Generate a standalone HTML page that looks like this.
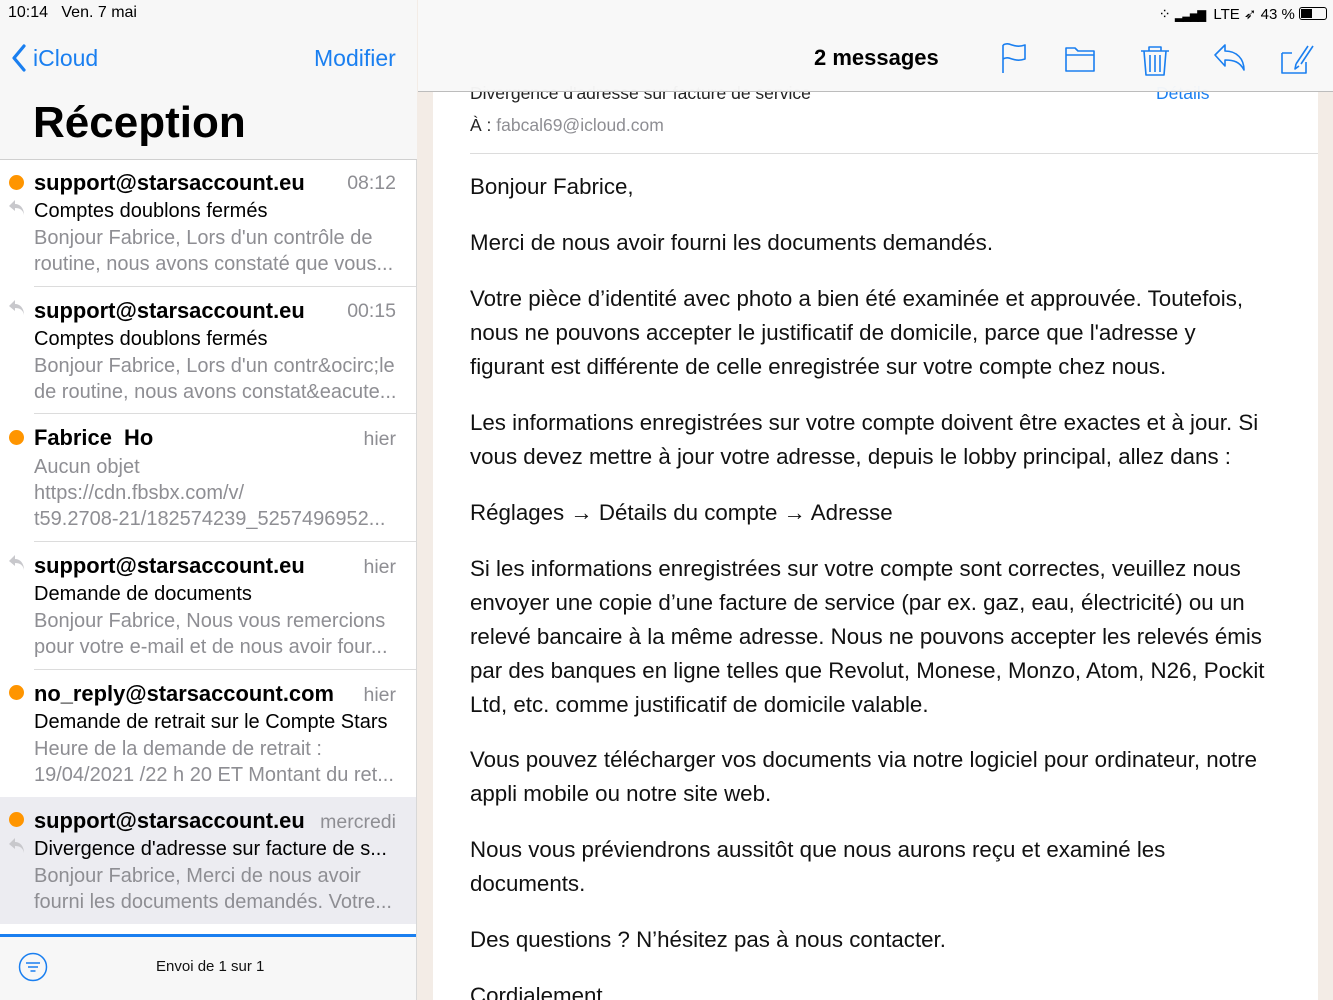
<!DOCTYPE html>
<html><head><meta charset="utf-8"><style>
*{margin:0;padding:0;box-sizing:border-box}
html,body{width:1333px;height:1000px;overflow:hidden}
body{position:relative;font-family:"Liberation Sans",sans-serif;background:#f3ece6}
.a{position:absolute;white-space:nowrap}
#left{position:absolute;left:0;top:0;width:417px;height:1000px;background:#fff;border-right:1px solid #d8d8d8}
#lhead{position:absolute;left:0;top:0;width:417px;height:160px;background:#f7f7f7;border-bottom:1px solid #d0d0d0}
.sender{font-weight:bold;font-size:21.9px;color:#000;left:34px}
.time{font-size:19.5px;color:#8e8e93;right:20px}
.subj{font-size:20px;color:#000;left:34px}
.prev{font-size:20px;color:#8e8e93;left:34px}
.dot{position:absolute;left:9px;width:15px;height:15px;border-radius:50%;background:#ff9500}
.sep{position:absolute;left:34px;right:0;height:1px;background:#dcdcdc}
.rep{position:absolute;left:8px}
#card{position:absolute;left:433px;top:0;width:885px;height:1000px;background:#fff}
#rhead{position:absolute;left:418px;top:0;width:915px;height:92px;background:rgba(248,248,248,0.97);border-bottom:1px solid #bcbcbc}
.p{position:absolute;left:470px;font-size:22.3px;line-height:34px;color:#111;width:805px}
</style></head><body>
<div id="left">
<div id="lhead">
<div class="a" style="left:8px;top:4px;font-size:16px;color:#000">10:14&nbsp;&nbsp;&nbsp;Ven. 7 mai</div>
<svg class="a" style="left:11px;top:44px" width="16" height="28"><path d="M13 2 L3 14 L13 26" stroke="#1a7ff0" stroke-width="3.2" fill="none" stroke-linecap="round" stroke-linejoin="round"/></svg>
<div class="a" style="left:33px;top:45px;font-size:23px;color:#1a7ff0">iCloud</div>
<div class="a" style="left:314px;top:45px;font-size:23px;color:#1a7ff0">Modifier</div>
<div class="a" style="left:33px;top:98px;font-size:44px;font-weight:bold;color:#000">Réception</div>
</div>

<div class="dot" style="top:175px"></div>
<div class="a sender" style="top:170px">support@starsaccount.eu</div>
<div class="a time" style="top:172px">08:12</div>
<svg class="rep" style="top:198px" width="18" height="18"><path d="M7 2 L1 8 L7 13 V10 C12 10 15 12 16 17 C16 10 12 6 7 6Z" fill="#c8c8cc"/></svg>
<div class="a subj" style="top:200px">Comptes doublons fermés</div>
<div class="a prev" style="top:227px">Bonjour Fabrice, Lors d'un contrôle de</div>
<div class="a prev" style="top:253px">routine, nous avons constaté que vous...</div>
<div class="sep" style="top:286px"></div>

<svg class="rep" style="top:298px" width="18" height="18"><path d="M7 2 L1 8 L7 13 V10 C12 10 15 12 16 17 C16 10 12 6 7 6Z" fill="#c8c8cc"/></svg>
<div class="a sender" style="top:298px">support@starsaccount.eu</div>
<div class="a time" style="top:300px">00:15</div>
<div class="a subj" style="top:328px">Comptes doublons fermés</div>
<div class="a prev" style="top:355px">Bonjour Fabrice, Lors d'un contr&amp;ocirc;le</div>
<div class="a prev" style="top:381px">de routine, nous avons constat&amp;eacute...</div>
<div class="sep" style="top:413px"></div>

<div class="dot" style="top:430px"></div>
<div class="a sender" style="top:425px">Fabrice&nbsp; Ho</div>
<div class="a time" style="top:428px">hier</div>
<div class="a prev" style="top:456px">Aucun objet</div>
<div class="a prev" style="top:482px">https://cdn.fbsbx.com/v/</div>
<div class="a prev" style="top:508px">t59.2708-21/182574239_5257496952...</div>
<div class="sep" style="top:541px"></div>

<svg class="rep" style="top:553px" width="18" height="18"><path d="M7 2 L1 8 L7 13 V10 C12 10 15 12 16 17 C16 10 12 6 7 6Z" fill="#c8c8cc"/></svg>
<div class="a sender" style="top:553px">support@starsaccount.eu</div>
<div class="a time" style="top:556px">hier</div>
<div class="a subj" style="top:583px">Demande de documents</div>
<div class="a prev" style="top:610px">Bonjour Fabrice, Nous vous remercions</div>
<div class="a prev" style="top:636px">pour votre e-mail et de nous avoir four...</div>
<div class="sep" style="top:669px"></div>

<div class="dot" style="top:685px"></div>
<div class="a sender" style="top:681px">no_reply@starsaccount.com</div>
<div class="a time" style="top:684px">hier</div>
<div class="a subj" style="top:711px">Demande de retrait sur le Compte Stars</div>
<div class="a prev" style="top:738px">Heure de la demande de retrait :</div>
<div class="a prev" style="top:764px">19/04/2021 /22 h 20 ET Montant du ret...</div>

<div style="position:absolute;left:0;top:797px;width:416px;height:127px;background:#ececf1"></div>
<div class="dot" style="top:812px"></div>
<div class="a sender" style="top:808px">support@starsaccount.eu</div>
<div class="a time" style="top:811px">mercredi</div>
<svg class="rep" style="top:836px" width="18" height="18"><path d="M7 2 L1 8 L7 13 V10 C12 10 15 12 16 17 C16 10 12 6 7 6Z" fill="#c8c8cc"/></svg>
<div class="a subj" style="top:838px">Divergence d'adresse sur facture de s...</div>
<div class="a prev" style="top:865px">Bonjour Fabrice, Merci de nous avoir</div>
<div class="a prev" style="top:891px">fourni les documents demandés. Votre...</div>

<div style="position:absolute;left:0;top:934px;width:416px;height:3px;background:#1a7ff0"></div>
<div style="position:absolute;left:0;top:937px;width:416px;height:63px;background:#f7f7f7"></div>
<svg class="a" style="left:18px;top:952px" width="30" height="30"><circle cx="15" cy="15" r="13.5" stroke="#1a7ff0" stroke-width="1.5" fill="none"/><path d="M8 11h14M10 15h10M12.5 19h5" stroke="#1a7ff0" stroke-width="1.5"/></svg>
<div class="a" style="left:156px;top:958px;font-size:15px;color:#111">Envoi de 1 sur 1</div>
</div>

<div id="card"></div>
<div class="a" style="left:470px;top:83px;font-size:17.5px;color:#222">Divergence d'adresse sur facture de service</div>
<div class="a" style="left:1156px;top:83px;font-size:17.5px;color:#1a7ff0">Détails</div>
<div class="a" style="left:470px;top:115px;font-size:17.5px;color:#222">À : <span style="color:#8e8e93">fabcal69@icloud.com</span></div>
<div style="position:absolute;left:470px;top:153px;width:848px;height:1px;background:#dcdcdc"></div>

<div id="rhead">
<div class="a" style="right:6px;top:5px;font-size:15px;color:#000">⁘ <b style="letter-spacing:-1px;font-size:11px">▂▃▅▇</b>&nbsp; LTE ➶ 43 % <span style="display:inline-block;width:28px;height:13px;border:1px solid #000;border-radius:3px;vertical-align:-1px;position:relative"><span style="position:absolute;left:1px;top:1px;width:11px;height:9px;background:#000"></span></span></div>
<div class="a" style="left:396px;top:45px;font-size:22px;font-weight:bold;color:#000">2 messages</div>
<svg class="a" style="left:580px;top:40px" width="340" height="38" fill="none" stroke="#1a7ff0" stroke-width="1.6" stroke-linejoin="round">
<path d="M5 33V5 M5 5 C12 1 15 9 27 5 V19 C15 23 12 15 5 19"/>
<path d="M68 8h9l3 3h16v20H68z M68 15h28"/>
<path d="M143 11h28 M151 11V7h12v4 M146 11l2 24h18l2-24 M152 15v17 M157 15v17 M162 15v17"/>
<path d="M217 15l10-10v6c12 0 19 8 19 19c-4-8-10-10-19-10v6z"/>
<path d="M284 13h10 M284 13v20h24V22 M298 24l12-18 M303 24l12-18 M298 24l-1 5 4-3"/>
</svg>
</div>

<div class="p" style="top:170px">Bonjour Fabrice,</div>
<div class="p" style="top:226px">Merci de nous avoir fourni les documents demandés.</div>
<div class="p" style="top:282px">Votre pièce d’identité avec photo a bien été examinée et approuvée. Toutefois, nous ne pouvons accepter le justificatif de domicile, parce que l'adresse y figurant est différente de celle enregistrée sur votre compte chez nous.</div>
<div class="p" style="top:406px">Les informations enregistrées sur votre compte doivent être exactes et à jour. Si vous devez mettre à jour votre adresse, depuis le lobby principal, allez dans :</div>
<div class="p" style="top:496px">Réglages → Détails du compte → Adresse</div>
<div class="p" style="top:552px">Si les informations enregistrées sur votre compte sont correctes, veuillez nous envoyer une copie d’une facture de service (par ex. gaz, eau, électricité) ou un relevé bancaire à la même adresse. Nous ne pouvons accepter les relevés émis par des banques en ligne telles que Revolut, Monese, Monzo, Atom, N26, Pockit Ltd, etc. comme justificatif de domicile valable.</div>
<div class="p" style="top:743px">Vous pouvez télécharger vos documents via notre logiciel pour ordinateur, notre appli mobile ou notre site web.</div>
<div class="p" style="top:833px">Nous vous préviendrons aussitôt que nous aurons reçu et examiné les documents.</div>
<div class="p" style="top:923px">Des questions ? N’hésitez pas à nous contacter.</div>
<div class="p" style="top:979px">Cordialement</div>
</body></html>
